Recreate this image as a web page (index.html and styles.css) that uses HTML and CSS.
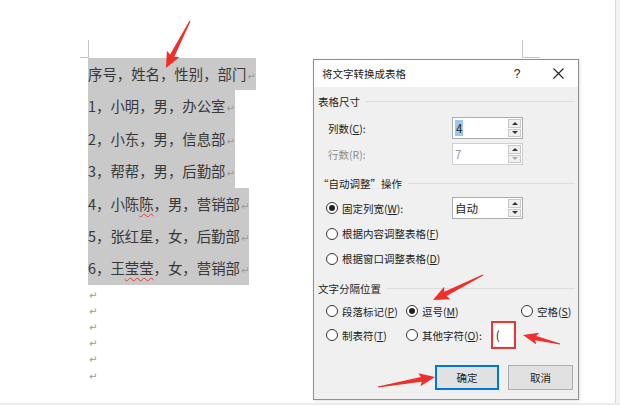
FILE: index.html
```html
<!DOCTYPE html>
<html lang="zh-CN">
<head>
    <meta charset="UTF-8">
    <title>将文字转换成表格</title>
    <link rel="stylesheet" href="styles.css">
</head>
<body>
    <div class="window">
        <div class="workspace">
            <div class="doc">
                <div class="sel-line">序号，姓名，性别，部门<span class="ret">↵</span></div>
                <div class="sel-line">1，小明，男，办公室<span class="ret">↵</span></div>
                <div class="sel-line">2，小东，男，信息部<span class="ret">↵</span></div>
                <div class="sel-line">3，帮帮，男，后勤部<span class="ret">↵</span></div>
                <div class="sel-line">4，小陈<span class="typo">陈</span>，男，营销部<span class="ret">↵</span></div>
                <div class="sel-line">5，张红星，女，后勤部<span class="ret">↵</span></div>
                <div class="sel-line">6，王<span class="typo">莹莹</span>，女，营销部<span class="ret">↵</span></div>
                <div class="empty-line"><span class="ret">↵</span></div>
                <div class="empty-line"><span class="ret">↵</span></div>
                <div class="empty-line"><span class="ret">↵</span></div>
                <div class="empty-line"><span class="ret">↵</span></div>
                <div class="empty-line"><span class="ret">↵</span></div>
                <div class="empty-line"><span class="ret">↵</span></div>
            </div>

            <!-- corner marks of the page, drawn behind the dialog -->
            <svg class="page-marks" width="615" height="403">
                <path d="M88.5 40 V57.5 H80" fill="none" stroke="#c4c4c4" stroke-width="1"/>
                <path d="M522.5 40 V57.5 H540" fill="none" stroke="#c4c4c4" stroke-width="1"/>
            </svg>

            <div class="dialog">
                <div class="dlg-title">
                    <span class="dlg-caption">将文字转换成表格</span>
                    <span class="dlg-help">?</span>
                    <span class="dlg-close">
                        <svg width="11" height="11" viewBox="0 0 11 11"><path d="M0.5 0.5 L10.5 10.5 M10.5 0.5 L0.5 10.5" stroke="#222" stroke-width="1.1"/></svg>
                    </span>
                </div>
                <div class="dlg-body">
                    <div class="group-head">表格尺寸</div>
                    <div class="field-row">
                        <span class="field-label">列数(<u>C</u>):</span>
                        <div class="spin">
                            <span class="spin-value"><span class="selected">4</span></span>
                            <span class="spin-btns"><span class="up"></span><span class="down"></span></span>
                        </div>
                    </div>
                    <div class="field-row disabled">
                        <span class="field-label">行数(R):</span>
                        <div class="spin">
                            <span class="spin-value">7</span>
                            <span class="spin-btns"><span class="up"></span><span class="down"></span></span>
                        </div>
                    </div>

                    <div class="group-head second">“自动调整”操作</div>
                    <div class="radio-row tall">
                        <span class="radio checked"></span>
                        <span class="radio-text">固定列宽(<u>W</u>):</span>
                        <div class="spin">
                            <span class="spin-value">自动</span>
                            <span class="spin-btns"><span class="up"></span><span class="down"></span></span>
                        </div>
                    </div>
                    <div class="radio-row">
                        <span class="radio"></span>
                        <span class="radio-text">根据内容调整表格(<u>F</u>)</span>
                    </div>
                    <div class="radio-row">
                        <span class="radio"></span>
                        <span class="radio-text">根据窗口调整表格(<u>D</u>)</span>
                    </div>

                    <div class="group-head third">文字分隔位置</div>
                    <div class="sep-grid">
                        <div class="sep-cell"><span class="radio"></span><span class="radio-text">段落标记(<u>P</u>)</span></div>
                        <div class="sep-cell"><span class="radio checked"></span><span class="radio-text">逗号(<u>M</u>)</span></div>
                        <div class="sep-cell"><span class="radio"></span><span class="radio-text">空格(<u>S</u>)</span></div>
                        <div class="sep-cell"><span class="radio"></span><span class="radio-text">制表符(<u>T</u>)</span></div>
                        <div class="sep-cell">
                            <span class="radio"></span><span class="radio-text">其他字符(<u>O</u>):</span>
                            <span class="mark-box"><span class="char-input">(</span></span>
                        </div>
                        <div class="sep-cell"></div>
                    </div>

                    <div class="btn-row">
                        <span class="btn default">确定</span>
                        <span class="btn">取消</span>
                    </div>
                </div>
            </div>

            <!-- red annotation arrows -->
            <svg class="arrows" width="615" height="403">
                <g fill="#ee2f2a">
                    <polygon transform="translate(190 21) rotate(117.1)" points="0,-0.6 39,-2.4 37,-7 52.8,0 37,7 39,2.4 0,0.6"/>
                    <polygon transform="translate(483 275) rotate(153.4)" points="0,-0.6 42,-2.4 40,-7 55.9,0 40,7 42,2.4 0,0.6"/>
                    <polygon transform="translate(560 344) rotate(-166.3)" points="0,-0.6 25,-2.2 23,-6 38.1,0 23,6 25,2.2 0,0.6"/>
                    <polygon transform="translate(378 387) rotate(-9.95)" points="0,-0.6 44,-2.4 42,-6.5 57.9,0 42,6.5 44,2.4 0,0.6"/>
                </g>
            </svg>
        </div>
        <div class="scrollbar"></div>
    </div>
    <div class="status-edge"></div>
</body>
</html>
```

FILE: styles.css
```css
body {
    margin: 0;
    width: 620px;
    height: 405px;
    overflow: hidden;
    background-color: #fff;
    font-family: "Noto Sans CJK SC", "Noto Sans", sans-serif;
    color: #222;
}

.window {
    display: flex;
    height: 403px;
}

.workspace {
    flex: 1;
    position: relative;
}

.scrollbar {
    width: 4px;
    border-left: 1px solid #dadada;
    background-color: #f3f3f3;
}

.status-edge {
    height: 2px;
    background-color: #ececec;
}

/* document */

.doc {
    padding: 58px 0 0 88px;
    font-size: 14.4px;
    color: #383838;
}

.sel-line {
    width: fit-content;
    height: 32.4px;
    line-height: 32.4px;
    background-color: #c9c9c9;
    white-space: nowrap;
}

.empty-line {
    height: 16.2px;
    line-height: 16.2px;
}

.ret {
    font-family: "DejaVu Sans", sans-serif;
    font-size: 10px;
    color: #9a9a9a;
    padding-left: 1px;
}

.typo {
    text-decoration: underline wavy #e53b3b;
    text-decoration-thickness: 1px;
    text-underline-offset: 3px;
}

.page-marks,
.arrows {
    position: absolute;
    left: 0;
    top: 0;
    pointer-events: none;
}

/* dialog */

.dialog {
    position: absolute;
    left: 313px;
    top: 59px;
    width: 266px;
    height: 341px;
    box-sizing: border-box;
    border: 1px solid #8f8f8f;
    background-color: #f0f0f0;
    box-shadow: 1px 1px 3px rgba(0, 0, 0, 0.12);
    font-size: 10.5px;
    display: flex;
    flex-direction: column;
}

.dlg-title {
    height: 27px;
    background-color: #fff;
    display: flex;
    align-items: center;
    padding-left: 8px;
}

.dlg-caption {
    flex: 1;
    color: #1a1a1a;
}

.dlg-help {
    width: 30px;
    text-align: center;
    font-family: "Liberation Sans", sans-serif;
    font-size: 12px;
}

.dlg-close {
    width: 30px;
    margin-left: 11px;
    margin-right: 5px;
    display: flex;
    justify-content: center;
}

.dlg-body {
    flex: 1;
    padding: 0 3px 0 4px;
    display: flex;
    flex-direction: column;
}

.group-head {
    height: 28px;
    display: flex;
    align-items: center;
    gap: 6px;
    color: #222;
}

.group-head::after {
    content: "";
    flex: 1;
    height: 1px;
    background-color: #dcdcdc;
}

.group-head.second {
    height: 24px;
    margin-top: 4px;
}

.group-head.third {
    height: 26px;
    margin-top: 4px;
}

.field-row {
    height: 26px;
    display: flex;
    align-items: center;
    padding-left: 10px;
}

.field-label {
    width: 124px;
}

.field-row.disabled {
    color: #8c8c8c;
}

.spin {
    width: 71px;
    height: 22px;
    box-sizing: border-box;
    border: 1px solid #abadb3;
    background-color: #fff;
    display: flex;
}

.spin-value {
    flex: 1;
    padding-left: 2px;
    line-height: 20px;
    font-size: 11.5px;
}

.selected {
    background-color: #99c9ef;
    padding: 0 1px;
}

.disabled .spin {
    border-color: #cfcfcf;
}

.disabled .spin-value {
    color: #9a9a9a;
}

.spin-btns {
    width: 13px;
    margin: 1px 1px 1px 0;
    display: flex;
    flex-direction: column;
    gap: 1px;
}

.spin-btns span {
    flex: 1;
    background-color: #f0f0f0;
    border: 1px solid #c9c9c9;
    display: flex;
    align-items: center;
    justify-content: center;
}

.spin-btns .up::before {
    content: "";
    border-left: 3px solid transparent;
    border-right: 3px solid transparent;
    border-bottom: 3px solid #333;
}

.spin-btns .down::before {
    content: "";
    border-left: 3px solid transparent;
    border-right: 3px solid transparent;
    border-top: 3px solid #333;
}

.disabled .spin-btns .down::before {
    border-top-color: #aaa;
}

.radio-row {
    height: 25px;
    display: flex;
    align-items: center;
    padding-left: 8px;
}

.radio-row.tall {
    height: 26px;
}

.radio-row .radio-text {
    width: 110px;
}

.radio {
    width: 12px;
    height: 12px;
    box-sizing: border-box;
    border: 1px solid #333;
    border-radius: 50%;
    background-color: #fff;
    display: flex;
    align-items: center;
    justify-content: center;
    flex-shrink: 0;
}

.radio.checked::after {
    content: "";
    width: 6px;
    height: 6px;
    border-radius: 50%;
    background-color: #222;
}

.radio-text {
    margin-left: 4px;
    white-space: nowrap;
}

.sep-grid {
    display: grid;
    grid-template-columns: 80px 115px 1fr;
    grid-template-rows: 20px 28px;
    padding-left: 8px;
}

.sep-cell {
    display: flex;
    align-items: center;
}

.mark-box {
    margin-left: 9px;
    width: 25px;
    height: 28px;
    box-sizing: border-box;
    border: 2px solid #e53935;
    padding: 1px;
    display: flex;
}

.char-input {
    flex: 1;
    background-color: #fff;
    padding-left: 2px;
    line-height: 22px;
    font-size: 11.5px;
}

.btn-row {
    margin-top: 16px;
    display: flex;
    justify-content: flex-end;
    gap: 9px;
    padding-right: 2px;
}

.btn {
    width: 65px;
    height: 25px;
    box-sizing: border-box;
    border: 1px solid #adadad;
    background-color: #e1e1e1;
    display: flex;
    align-items: center;
    justify-content: center;
}

.btn.default {
    width: 64px;
    border: 2px solid #0078d7;
}
```
